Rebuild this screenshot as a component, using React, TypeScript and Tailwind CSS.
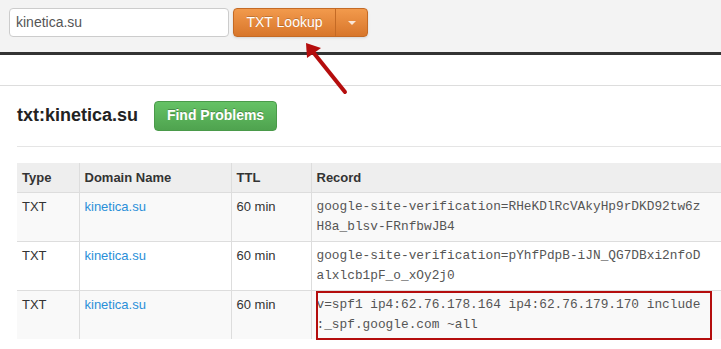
import React from "react";

const rows = [
  {
    type: "TXT",
    domain: "kinetica.su",
    ttl: "60 min",
    record: ["google-site-verification=RHeKDlRcVAkyHp9rDKD92tw6z", "H8a_blsv-FRnfbwJB4"],
  },
  {
    type: "TXT",
    domain: "kinetica.su",
    ttl: "60 min",
    record: ["google-site-verification=pYhfPdpB-iJN_QG7DBxi2nfoD", "alxlcb1pF_o_xOy2j0"],
  },
  {
    type: "TXT",
    domain: "kinetica.su",
    ttl: "60 min",
    record: ["v=spf1 ip4:62.76.178.164 ip4:62.76.179.170 include", ":_spf.google.com ~all"],
    highlight: true,
  },
];

export default function App() {
  return (
    <div className="relative h-[349px] w-[721px] overflow-hidden bg-white font-['Liberation_Sans',Arial,sans-serif] text-[#333]">
      {/* Search bar */}
      <div className="flex h-[55px] items-start gap-1 border-b-[3px] border-[#333] bg-[#f3f3f3] pl-[9px] pt-2">
        <div className="flex h-[29px] w-[220px] items-center rounded border border-[#ccc] bg-white px-[6px] text-[14px] text-[#555]">
          kinetica.su
        </div>
        <div className="flex h-[29px] overflow-hidden rounded border border-[#c46a25] bg-gradient-to-b from-[#f29a4c] to-[#d8762a] text-white shadow-sm">
          <span className="flex w-[101px] items-center justify-center text-[14px] [text-shadow:0_-1px_0_rgba(0,0,0,0.2)]">
            TXT Lookup
          </span>
          <span className="flex w-[32px] items-center justify-center border-l border-[#c46a25]">
            <span className="h-0 w-0 border-x-[4px] border-t-[4px] border-x-transparent border-t-white/80" />
          </span>
        </div>
      </div>

      <div className="h-[31px] border-b border-[#ddd]" />

      {/* Result */}
      <div className="pl-[17px]">
        <div className="flex h-[61px] items-center gap-4 border-b border-[#e5e5e5] pb-[1px]">
          <h3 className="text-[18px] font-bold text-[#222]">txt:kinetica.su</h3>
          <button className="h-[30px] w-[123px] rounded border border-[#4a9a4a] bg-gradient-to-b from-[#65c265] to-[#4fa34f] text-[14px] font-bold text-white [text-shadow:0_-1px_0_rgba(0,0,0,0.25)]">
            Find Problems
          </button>
        </div>

        <table className="mt-[16px] w-[720px] table-fixed border-collapse text-[13px] leading-5">
          <colgroup>
            <col className="w-[62px]" />
            <col className="w-[152px]" />
            <col className="w-[80px]" />
            <col />
          </colgroup>
          <thead>
            <tr className="h-[29px] bg-[#eee] text-left">
              <th className="px-[5px] pb-1 pt-[5px] font-bold text-[#333]">Type</th>
              <th className="border-l border-[#ddd] px-[5px] pb-1 pt-[5px] font-bold text-[#333]">Domain Name</th>
              <th className="border-l border-[#ddd] px-[5px] pb-1 pt-[5px] font-bold text-[#333]">TTL</th>
              <th className="border-l border-[#ddd] px-[5px] pb-1 pt-[5px] font-bold text-[#333]">Record</th>
            </tr>
          </thead>
          <tbody>
            {rows.map((r, i) => (
              <tr key={i} className={i % 2 === 0 ? "bg-[#f9f9f9]" : "bg-white"}>
                <td className="border-t border-[#ddd] px-[5px] py-1 align-top">{r.type}</td>
                <td className="border-l border-t border-[#ddd] px-[5px] py-1 align-top text-[#2a8fd8]">{r.domain}</td>
                <td className="border-l border-t border-[#ddd] px-[5px] py-1 align-top">{r.ttl}</td>
                <td className="relative border-l border-t border-[#ddd] py-1 pl-[5px] align-top">
                  <div className="whitespace-pre font-['Liberation_Mono','Courier_New',monospace] text-[12.8px] leading-5 text-[#555]">
                    {r.record.map((line, j) => (
                      <div key={j}>{line}</div>
                    ))}
                  </div>
                  {r.highlight && (
                    <div className="absolute left-[4px] top-0 h-[49px] w-[396px] border-2 border-[#b40d0d]" />
                  )}
                </td>
              </tr>
            ))}
          </tbody>
        </table>
      </div>

      {/* Annotation arrow */}
      <svg className="absolute left-0 top-0" width="721" height="349" viewBox="0 0 721 349">
        <line x1="345" y1="92" x2="313" y2="52" stroke="#b50d0d" strokeWidth="4" strokeLinecap="round" />
        <polygon points="306,43 321,48 307,58" fill="#b50d0d" />
      </svg>
    </div>
  );
}
